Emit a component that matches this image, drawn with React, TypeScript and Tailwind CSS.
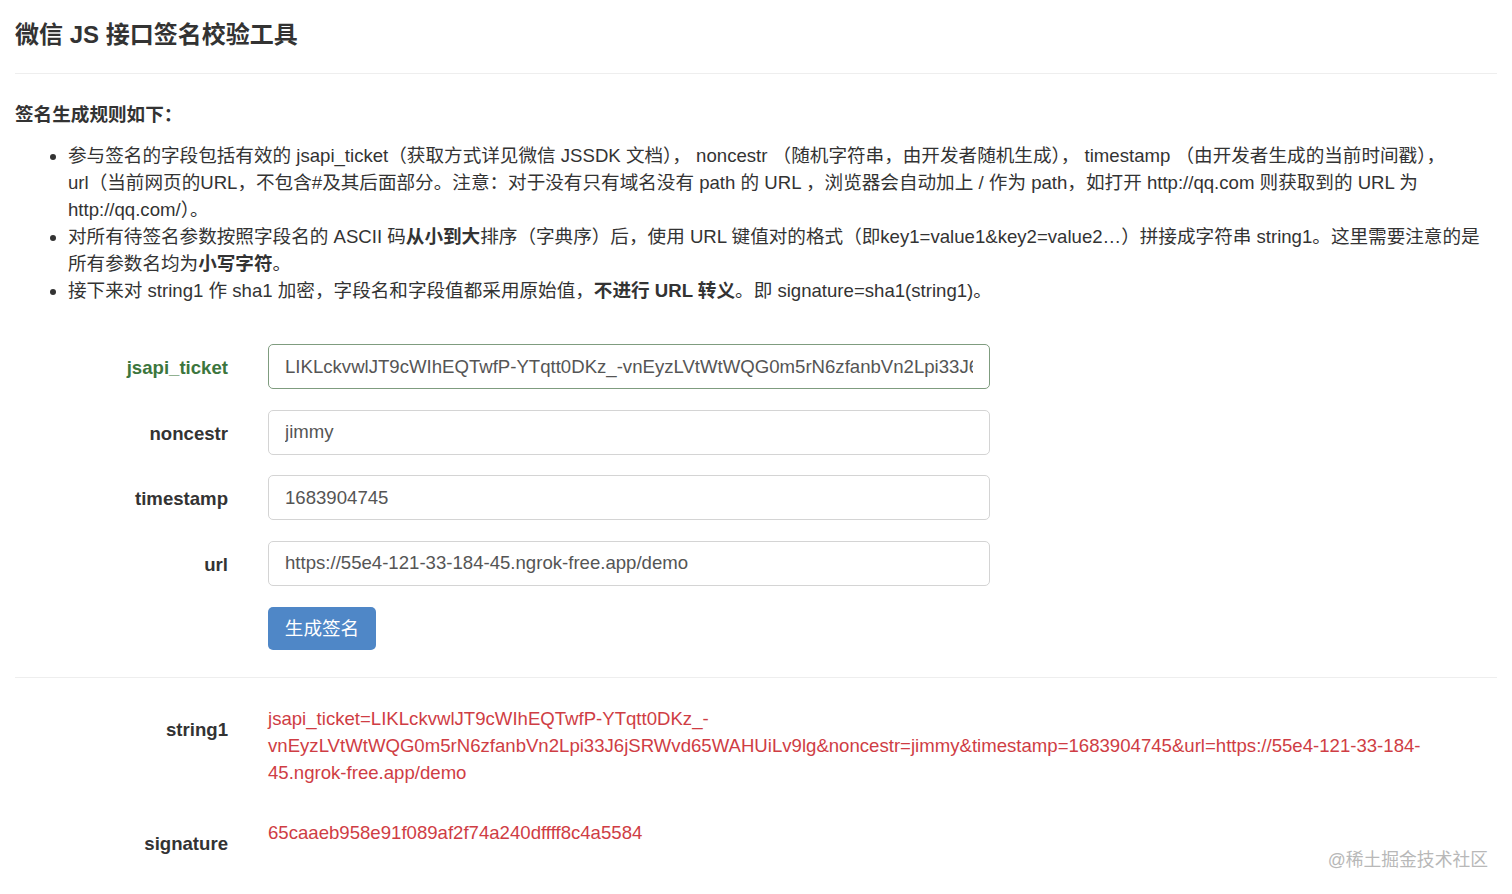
import React from 'react';

const fields = [
  { label: 'jsapi_ticket', value: 'LIKLckvwlJT9cWIhEQTwfP-YTqtt0DKz_-vnEyzLVtWtWQG0m5rN6zfanbVn2Lpi33J6jSRWvd65WAHUiLv9lg', success: true },
  { label: 'noncestr', value: 'jimmy' },
  { label: 'timestamp', value: '1683904745' },
  { label: 'url', value: 'https://55e4-121-33-184-45.ngrok-free.app/demo' },
];

const App: React.FC = () => {
  return (
    <div className="relative min-h-[894px] bg-white px-[15px] pt-[22px] font-['Liberation_Sans','Noto_Sans_CJK_SC',sans-serif] text-[18.6px] leading-[27px] text-[#333]">
      <h3 className="text-[24px] leading-[26px] font-semibold">微信 JS 接口签名校验工具</h3>
      <hr className="mt-[25px] border-t border-[#eee]" />

      <p className="mt-[27px] font-bold">签名生成规则如下：</p>
      <ul className="mt-[14px] list-disc pl-[53px] whitespace-nowrap">
        <li>
          参与签名的字段包括有效的 jsapi_ticket（获取方式详见微信 JSSDK 文档）， noncestr （随机字符串，由开发者随机生成）， timestamp （由开发者生成的当前时间戳），
          <br />
          url（当前网页的URL，不包含#及其后面部分。注意：对于没有只有域名没有 path 的 URL ，浏览器会自动加上 / 作为 path，如打开 http://qq.com 则获取到的 URL 为
          <br />
          http://qq.com/）。
        </li>
        <li>
          对所有待签名参数按照字段名的 ASCII 码<b>从小到大</b>排序（字典序）后，使用 URL 键值对的格式（即key1=value1&amp;key2=value2…）拼接成字符串 string1。这里需要注意的是
          <br />
          所有参数名均为<b>小写字符</b>。
        </li>
        <li>
          接下来对 string1 作 sha1 加密，字段名和字段值都采用原始值，<b>不进行 URL 转义</b>。即 signature=sha1(string1)。
        </li>
      </ul>

      {/* form */}
      <div className="mt-[40px] flex flex-col gap-[20.5px]">
        {fields.map((f) => (
          <div key={f.label} className="flex items-center">
            <label className={`w-[213px] pt-[2px] text-right font-bold ${f.success ? 'text-[#3c763d]' : ''}`}>{f.label}</label>
            <input
              readOnly
              value={f.value}
              className={`ml-[40px] h-[45px] w-[722px] rounded-[5px] border bg-white pl-[16px] pr-[16px] text-[#555] outline-none ${
                f.success ? 'border-[#7f9c7f]' : 'border-[#d4d4d4]'
              }`}
            />
          </div>
        ))}
      </div>
      <div className="mt-[21px] pl-[253px]">
        <button className="h-[43px] w-[108px] rounded-[5px] bg-[#4f87c7] text-white">生成签名</button>
      </div>

      <hr className="mt-[27px] border-t border-[#eee]" />

      {/* result */}
      <div className="mt-[27px] flex">
        <div className="mt-[11px] w-[213px] text-right font-bold">string1</div>
        <div className="ml-[40px] text-[#cf3d44]">
          <div>jsapi_ticket=LIKLckvwlJT9cWIhEQTwfP-YTqtt0DKz_-</div>
          <div>vnEyzLVtWtWQG0m5rN6zfanbVn2Lpi33J6jSRWvd65WAHUiLv9lg&amp;noncestr=jimmy&amp;timestamp=1683904745&amp;url=https://55e4-121-33-184-</div>
          <div>45.ngrok-free.app/demo</div>
        </div>
      </div>
      <div className="mt-[33px] flex">
        <div className="mt-[11px] w-[213px] text-right font-bold">signature</div>
        <div className="ml-[40px] text-[#cf3d44]">65caaeb958e91f089af2f74a240dffff8c4a5584</div>
      </div>

      <div className="absolute right-[24px] bottom-[24px] text-[17.8px] leading-[20px] text-[#b8b8b8]">@稀土掘金技术社区</div>
    </div>
  );
};

export default App;
